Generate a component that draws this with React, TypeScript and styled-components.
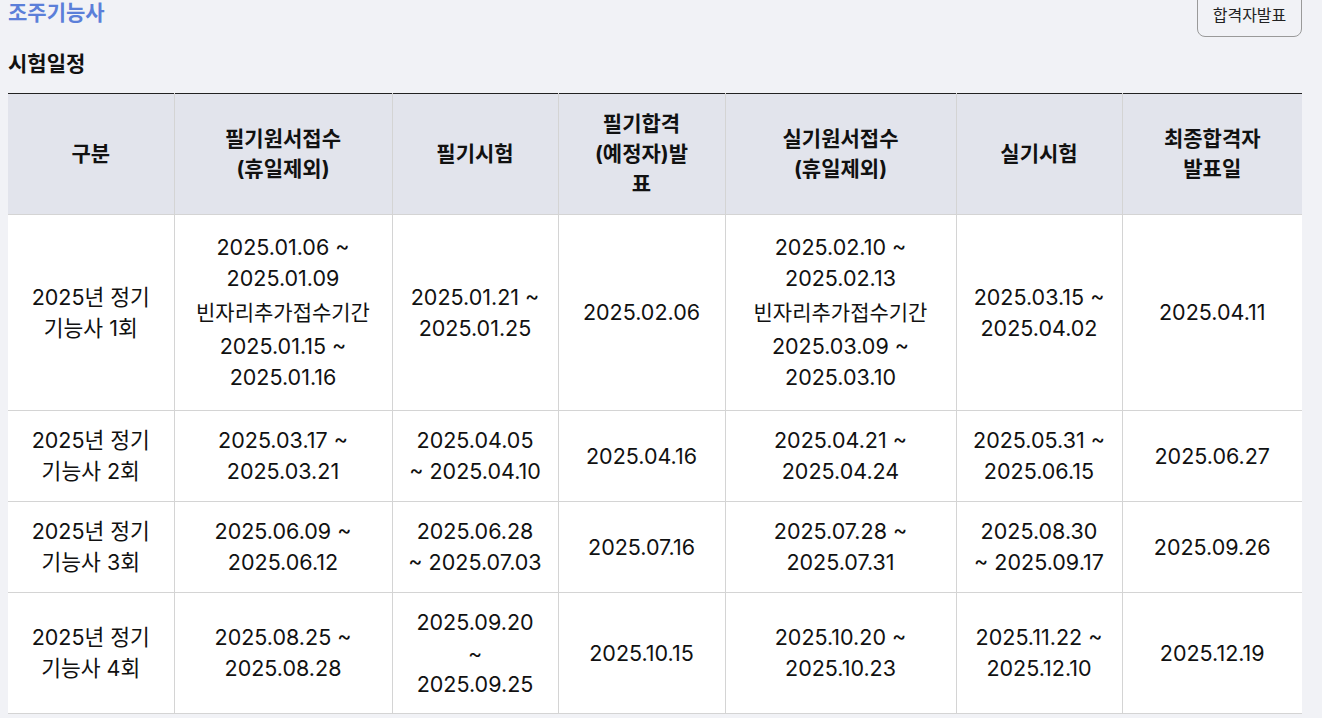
import React from 'react';
import styled, {createGlobalStyle} from 'styled-components';

const GlobalStyle = createGlobalStyle`
  html, body {
    margin: 0;
    padding: 0;
    background: #f1f2f6;
    font-family: Inter, "Noto Sans CJK KR", sans-serif;
    color: #111;
  }
`;

type Row = {
  h: number;
  cells: React.ReactNode[];
};

const widths = [166, 218, 166, 167, 231, 166, 180];

const heads = [
  ['구분'],
  ['필기원서접수', '(휴일제외)'],
  ['필기시험'],
  ['필기합격', '(예정자)발', '표'],
  ['실기원서접수', '(휴일제외)'],
  ['실기시험'],
  ['최종합격자', '발표일'],
];

const Lines = ({items}: { items: string[] }) => (
  <>
    {items.map((t, i) => (
      <div key={i}>{t}</div>
    ))}
  </>
);

const WithExtra = ({main, extra}: { main: string[]; extra: string[] }) => (
  <>
    <Lines items={main}/>
    <Note>빈자리추가접수기간</Note>
    <Lines items={extra}/>
  </>
);

const rows: Row[] = [
  {
    h: 196,
    cells: [
      <Lines items={['2025년 정기', '기능사 1회']}/>,
      <WithExtra main={['2025.01.06 ~', '2025.01.09']} extra={['2025.01.15 ~', '2025.01.16']}/>,
      <Lines items={['2025.01.21 ~', '2025.01.25']}/>,
      <Lines items={['2025.02.06']}/>,
      <WithExtra main={['2025.02.10 ~', '2025.02.13']} extra={['2025.03.09 ~', '2025.03.10']}/>,
      <Lines items={['2025.03.15 ~', '2025.04.02']}/>,
      <Lines items={['2025.04.11']}/>,
    ],
  },
  {
    h: 91,
    cells: [
      <Lines items={['2025년 정기', '기능사 2회']}/>,
      <Lines items={['2025.03.17 ~', '2025.03.21']}/>,
      <Lines items={['2025.04.05', '~ 2025.04.10']}/>,
      <Lines items={['2025.04.16']}/>,
      <Lines items={['2025.04.21 ~', '2025.04.24']}/>,
      <Lines items={['2025.05.31 ~', '2025.06.15']}/>,
      <Lines items={['2025.06.27']}/>,
    ],
  },
  {
    h: 91,
    cells: [
      <Lines items={['2025년 정기', '기능사 3회']}/>,
      <Lines items={['2025.06.09 ~', '2025.06.12']}/>,
      <Lines items={['2025.06.28', '~ 2025.07.03']}/>,
      <Lines items={['2025.07.16']}/>,
      <Lines items={['2025.07.28 ~', '2025.07.31']}/>,
      <Lines items={['2025.08.30', '~ 2025.09.17']}/>,
      <Lines items={['2025.09.26']}/>,
    ],
  },
  {
    h: 121,
    cells: [
      <Lines items={['2025년 정기', '기능사 4회']}/>,
      <Lines items={['2025.08.25 ~', '2025.08.28']}/>,
      <Lines items={['2025.09.20', '~', '2025.09.25']}/>,
      <Lines items={['2025.10.15']}/>,
      <Lines items={['2025.10.20 ~', '2025.10.23']}/>,
      <Lines items={['2025.11.22 ~', '2025.12.10']}/>,
      <Lines items={['2025.12.19']}/>,
    ],
  },
];

const App = () => {
  return (
    <Page>
      <GlobalStyle/>
      <TopBar>
        <Title>조주기능사</Title>
        <ResultButton type="button">합격자발표</ResultButton>
      </TopBar>
      <SectionTitle>시험일정</SectionTitle>
      <Table>
        <colgroup>
          {widths.map((w, i) => (
            <col key={i} style={{width: w}}/>
          ))}
        </colgroup>
        <thead>
          <HeadRow>
            {heads.map((h, i) => (
              <Th key={i}>
                <Lines items={h}/>
              </Th>
            ))}
          </HeadRow>
        </thead>
        <tbody>
          {rows.map((r, i) => (
            <BodyRow key={i} $h={r.h}>
              {r.cells.map((c, j) => (
                <Td key={j}>{c}</Td>
              ))}
            </BodyRow>
          ))}
        </tbody>
      </Table>
    </Page>
  );
};

export default App;

const Page = styled.div`
  padding: 0 20px 0 8px;
`;

const TopBar = styled.div`
  display: flex;
  justify-content: space-between;
  align-items: flex-start;
  margin-top: -9px;
`;

const Title = styled.h1`
  margin: 0;
  font-size: 21px;
  line-height: 44px;
  font-weight: 700;
  color: #5b7fd9;
`;

const ResultButton = styled.button`
  height: 46px;
  width: 105px;
  padding: 0;
  border: 1px solid #9a9a9a;
  border-radius: 8px;
  background: transparent;
  font-family: Inter, "Noto Sans CJK KR", sans-serif;
  font-size: 16px;
  color: #222;
`;

const SectionTitle = styled.h2`
  margin: 14px 0 0;
  font-size: 21px;
  line-height: 26px;
  font-weight: 700;
  color: #111;
`;

const Table = styled.table`
  margin-top: 16px;
  width: 1294px;
  table-layout: fixed;
  border-collapse: collapse;
  border-top: 1px solid #222;
  background: #fff;
`;

const HeadRow = styled.tr`
  height: 121px;
  background: #e2e4ec;
`;

const BodyRow = styled.tr<{ $h: number }>`
  height: ${(p) => p.$h}px;
`;

const Th = styled.th`
  padding: 0 8px;
  font-size: 21px;
  line-height: 30px;
  font-weight: 700;
  color: #111;
  text-align: center;
  vertical-align: middle;
  border-left: 1px solid #d4d4d4;
  border-bottom: 1px solid #d4d4d4;

  &:first-child {
    border-left: none;
  }
`;

const Td = styled.td`
  padding: 0 6px;
  font-size: 21.5px;
  line-height: 31px;
  font-weight: 400;
  color: #111;
  text-align: center;
  vertical-align: middle;
  border-left: 1px solid #d4d4d4;
  border-bottom: 1px solid #d4d4d4;

  &:first-child {
    border-left: none;
  }
`;

const Note = styled.div`
  margin: 3px 0;
  font-size: 21px;
`;
